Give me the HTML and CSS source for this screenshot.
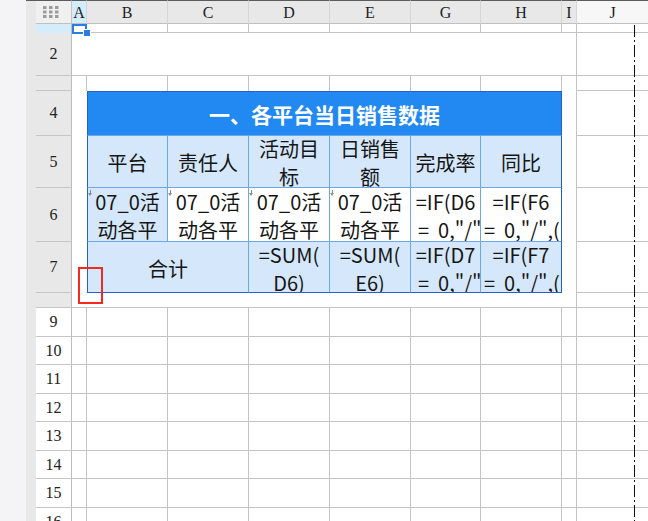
FILE: index.html
```html
<!DOCTYPE html>
<html lang="zh-CN">
<head>
  <meta charset="UTF-8">
  <meta name="viewport" content="width=device-width, initial-scale=1.0">
  <title>各平台当日销售数据</title>
  <link rel="stylesheet" href="styles.css">
</head>
<body>
  <div class="page">
    <div class="side"></div>
    <div class="gutter"></div>

    <div class="sheet" id="sheet">
      <!-- column headers -->
      <div class="corner">
        <svg width="16" height="12" viewBox="0 0 16 12">
          <g fill="#9b9b9b">
            <rect x="0" y="0" width="3.5" height="3"/><rect x="6" y="0" width="3.5" height="3"/><rect x="12" y="0" width="3.5" height="3"/>
            <rect x="0" y="4.5" width="3.5" height="3"/><rect x="6" y="4.5" width="3.5" height="3"/><rect x="12" y="4.5" width="3.5" height="3"/>
            <rect x="0" y="9" width="3.5" height="3"/><rect x="6" y="9" width="3.5" height="3"/><rect x="12" y="9" width="3.5" height="3"/>
          </g>
        </svg>
      </div>
      <div class="ch sel">A</div>
      <div class="ch">B</div>
      <div class="ch">C</div>
      <div class="ch">D</div>
      <div class="ch">E</div>
      <div class="ch">G</div>
      <div class="ch">H</div>
      <div class="ch">I</div>
      <div class="ch out">J</div>

      <!-- row 1 -->
      <div class="rh sel"></div>
      <div class="c"></div><div class="c"></div><div class="c"></div><div class="c"></div>
      <div class="c"></div><div class="c"></div><div class="c"></div><div class="c"></div>
      <div class="c j"></div>

      <!-- row 2 -->
      <div class="rh">2</div>
      <div class="c span8"></div>
      <div class="c j"></div>

      <!-- row 3 -->
      <div class="rh"></div>
      <div class="c nb"></div>
      <div class="c nb"></div><div class="c nb"></div><div class="c nb"></div>
      <div class="c nb"></div><div class="c nb"></div><div class="c nb"></div>
      <div class="c col-i"></div>
      <div class="c j"></div>

      <!-- row 4 -->
      <div class="rh">4</div>
      <div class="c col-a"></div>
      <div class="t title">一、各平台当日销售数据</div>
      <div class="c j"></div>

      <!-- row 5 -->
      <div class="rh">5</div>
      <div class="t first"><span class="ln">平台</span></div>
      <div class="t"><span class="ln">责任人</span></div>
      <div class="t"><span class="ln">活动目</span><span class="ln">标</span></div>
      <div class="t"><span class="ln">日销售</span><span class="ln">额</span></div>
      <div class="t"><span class="ln">完成率</span></div>
      <div class="t last"><span class="ln">同比</span></div>
      <div class="c j"></div>

      <!-- row 6 -->
      <div class="rh">6</div>
      <div class="t first"><span class="mark"></span><span class="ln">07_0活</span><span class="ln">动各平</span></div>
      <div class="t w"><span class="mark"></span><span class="ln">07_0活</span><span class="ln">动各平</span></div>
      <div class="t w"><span class="mark"></span><span class="ln">07_0活</span><span class="ln">动各平</span></div>
      <div class="t w"><span class="mark"></span><span class="ln">07_0活</span><span class="ln">动各平</span></div>
      <div class="t w"><span class="ln">=IF(D6</span><span class="ln ind">=&nbsp;&nbsp;0,"/",E6/D6)</span></div>
      <div class="t w last"><span class="ln">=IF(F6</span><span class="ln">=&nbsp;&nbsp;0,"/",(E6-F6)/F6)</span></div>
      <div class="c j"></div>

      <!-- row 7 -->
      <div class="rh">7</div>
      <div class="t first bot span2"><span class="ln">合计</span></div>
      <div class="t bot"><span class="ln">=SUM(</span><span class="ln">D6)</span></div>
      <div class="t bot"><span class="ln">=SUM(</span><span class="ln">E6)</span></div>
      <div class="t bot"><span class="ln">=IF(D7</span><span class="ln ind">=&nbsp;&nbsp;0,"/",E7/D7)</span></div>
      <div class="t bot last"><span class="ln">=IF(F7</span><span class="ln">=&nbsp;&nbsp;0,"/",(E7-F7)/F7)</span></div>
      <div class="c j"></div>

      <!-- row 8 -->
      <div class="rh"></div>
      <div class="c span6"></div>
      <div class="c j"></div>
    </div>

    <!-- overlays -->
    <div class="sel-box"></div>
    <div class="handle"></div>
    <div class="red-box"></div>
    <div class="break-line"></div>
  </div>

  <script>
    // empty rows below the table
    const sheet = document.getElementById('sheet');
    let rowsHtml = '';
    for (let r = 9; r <= 16; r++) {
      rowsHtml += `<div class="rh lo">${r}</div>`;
      rowsHtml += '<div class="c"></div>'.repeat(8);
      rowsHtml += '<div class="c j"></div>';
    }
    sheet.insertAdjacentHTML('beforeend', rowsHtml);
  </script>
</body>
</html>
```

FILE: styles.css
```css
html, body {
  margin: 0;
  padding: 0;
  height: 100%;
  overflow: hidden;
  background-color: #ffffff;
}

.page {
  position: relative;
  display: flex;
  height: 100%;
}

.side {
  width: 26px;
  flex: none;
  background-color: #f4f4f6;
}

.gutter {
  width: 10px;
  flex: none;
  background-color: #e8e8e8;
  border-top: 1px solid #5c5c5c;
  box-sizing: border-box;
}

/* Sheet grid: header, A, B, C, D, E, G, H, I, J */
.sheet {
  flex: 1;
  display: grid;
  grid-template-columns: 36px 15px 81px 81px 81px 81px 70px 81px 15px 1fr;
  grid-template-rows: 24px 9px 43px 15px 45px 52px 54px 51px 15px 29px 28px 29px 28px 29px 28px 29px 29px;
  align-content: start;
  font-family: "Liberation Serif", "DejaVu Serif", serif;
  color: #222;
}

.sheet > div {
  box-sizing: border-box;
  min-width: 0;
}

.corner {
  background-color: #f0f0f0;
  border-top: 1px solid #5c5c5c;
  border-right: 1px solid #c4c4c4;
  border-bottom: 1px solid #c0c0c0;
  padding: 5px 0 0 7px;
}

.corner svg {
  display: block;
}

.ch {
  background-color: #e8e8e8;
  border-top: 1px solid #5c5c5c;
  border-right: 1px solid #d6d6d6;
  border-bottom: 1px solid #c0c0c0;
  display: flex;
  align-items: center;
  justify-content: center;
  font-size: 16px;
  padding-top: 1px;
}

.ch.sel {
  background-color: #d3eefa;
}

.ch.out {
  background-color: #f7f7f7;
  border-right: none;
}

.rh {
  background-color: #e8e8e8;
  border-right: 1px solid #bdbdbd;
  border-bottom: 1px solid #c6c6c6;
  display: flex;
  align-items: center;
  justify-content: center;
  font-size: 16px;
  overflow: hidden;
}

.rh.sel {
  background-color: #d3eefa;
  border-bottom: none;
}

.rh.lo {
  background-color: #ffffff;
}

/* plain cells */
.c {
  background-color: #ffffff;
  border-right: 1px solid #c4c4c4;
  border-bottom: 1px solid #c4c4c4;
}

.c.j {
  border-right: none;
}

.c.nb {
  border-bottom: none;
}

.c.span8 {
  grid-column: span 8;
}

.c.span6 {
  grid-column: span 6;
  border-right: none;
}

.c.col-a {
  grid-row: span 5;
  border-right: none;
}

.c.col-i {
  grid-row: span 6;
}

/* table cells */
.t {
  position: relative;
  display: flex;
  flex-direction: column;
  justify-content: center;
  text-align: center;
  overflow: hidden;
  padding: 3px 3px 0;
  background-color: #d5e8fb;
  border-right: 1px solid #6fa6e6;
  border-bottom: 1px solid #6fa6e6;
  font-family: "Noto Sans CJK SC", "Noto Sans", sans-serif;
  font-size: 20px;
  line-height: 28px;
  color: #151515;
}

.t .ln {
  display: block;
  white-space: nowrap;
}

.t .ind {
  padding-left: 4px;
}

.t.w {
  background-color: #ffffff;
}

.t.first {
  border-left: 1px solid #2463c4;
}

.t.last {
  border-right-color: #2463c4;
}

.t.bot {
  border-bottom-color: #2463c4;
}

.t.span2 {
  grid-column: span 2;
}

.title {
  grid-column: span 6;
  padding-top: 0;
  background-color: #2389f2;
  border: 1px solid #2463c4;
  border-bottom-color: #6fa6e6;
  color: #ffffff;
  font-weight: bold;
  font-size: 21px;
}

/* small arrow at top-left of filled cells */
.mark {
  position: absolute;
  top: 2px;
  left: 2px;
  width: 1px;
  height: 4px;
  background-color: #8a8a8a;
}

.mark::after {
  content: "";
  position: absolute;
  left: -2px;
  top: 3px;
  border-left: 2.5px solid transparent;
  border-right: 2.5px solid transparent;
  border-top: 3px solid #8a8a8a;
}

/* overlays */
.sel-box {
  position: absolute;
  left: 72px;
  top: 24px;
  width: 15px;
  height: 10px;
  box-sizing: border-box;
  border: 2px solid #2b7de3;
}

.handle {
  position: absolute;
  left: 84px;
  top: 30px;
  width: 6px;
  height: 6px;
  background-color: #2b7de3;
  border: 1px solid #ffffff;
  box-sizing: content-box;
  margin: -1px 0 0 -1px;
}

.red-box {
  position: absolute;
  left: 78px;
  top: 267px;
  width: 25px;
  height: 37px;
  box-sizing: border-box;
  border: 2px solid #f52a1e;
}

.break-line {
  position: absolute;
  left: 634px;
  top: 25px;
  bottom: 0;
  width: 1px;
  background: repeating-linear-gradient(to bottom, #111 0, #111 12px, transparent 12px, transparent 15px, #111 15px, #111 17px, transparent 17px, transparent 20px);
}
```
